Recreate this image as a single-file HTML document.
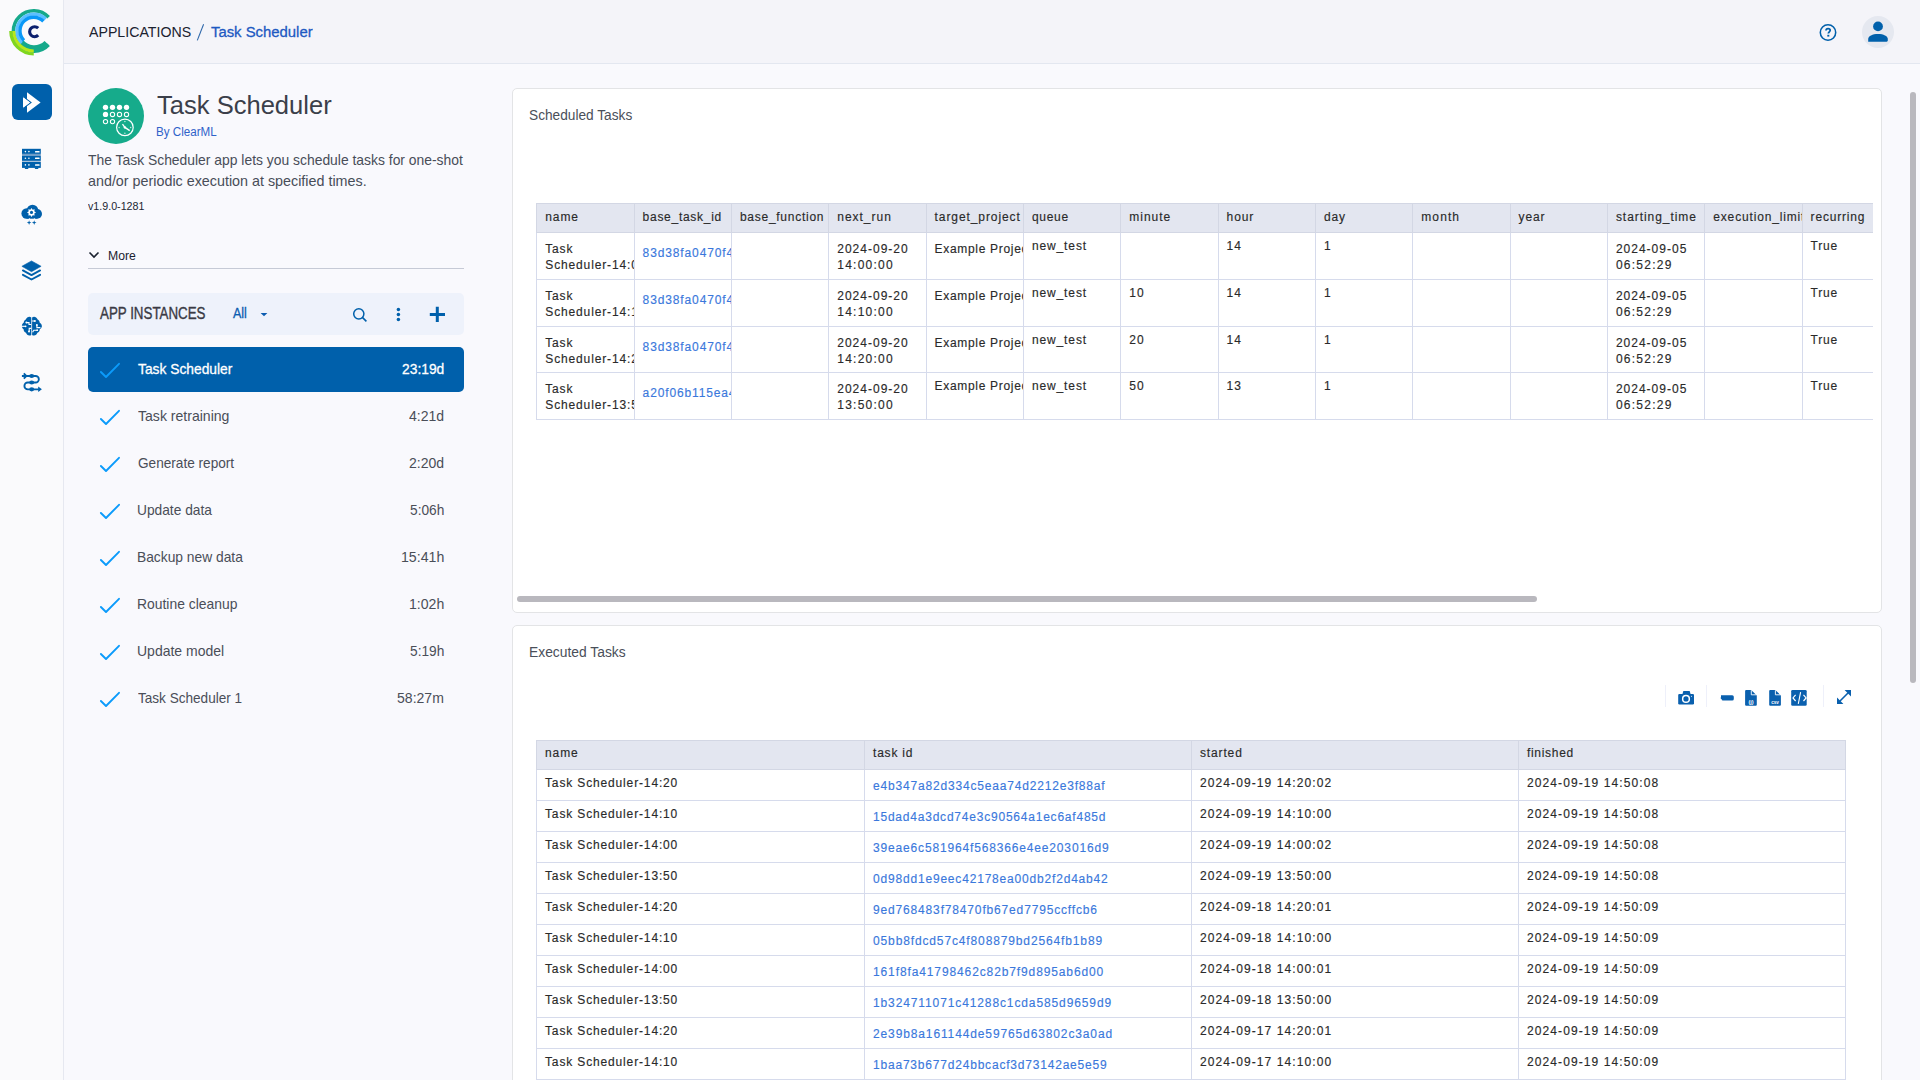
<!DOCTYPE html><html><head><meta charset="utf-8"><style>
*{box-sizing:border-box;margin:0;padding:0}
html,body{width:1920px;height:1080px;overflow:hidden;background:#f9f9fd;font-family:"Liberation Sans", sans-serif;}
.a{position:absolute}
.t{position:absolute;white-space:nowrap;line-height:1}
svg{position:absolute;overflow:visible}
</style></head><body>
<div class="a" style="left:0;top:0;width:63px;height:1080px;background:#fafafc"></div><div class="a" style="left:63px;top:0;width:1px;height:1080px;background:#e6e8f0"></div><div class="a" style="left:64px;top:0;width:1856px;height:63px;background:#f4f4f9"></div><div class="a" style="left:64px;top:63px;width:1856px;height:1px;background:#e3e7f0"></div><svg style="left:0;top:0" width="64" height="64" viewBox="0 0 64 64"><g fill="none"><path d="M48.60 17.16 A20.3 20.3 0 1 0 48.60 44.84" stroke="#16a98b" stroke-width="3.6"/><path d="M49.0 45.3 L44.6 41.0 A14.5 14.5 0 0 1 22.8 39.5 L19.7 44.5 A20 20 0 0 0 49.0 45.3 Z" fill="#16a98b"/><path d="M45.77 18.98 A17.0 17.0 0 0 0 21.73 43.02" stroke="#5bbfff" stroke-width="3.3"/><path d="M43.44 21.31 A13.7 13.7 0 0 0 23.90 40.52" stroke="#0a98f7" stroke-width="3.4"/><path d="M10.75 31.00 A23.0 23.0 0 0 0 33.75 54.00" stroke="#80d61e" stroke-width="3.1"/><path d="M13.75 31.00 A20.0 20.0 0 0 0 33.75 51.00" stroke="#b9e71a" stroke-width="3.0"/></g><path d="M38.2 28.2 A5 5 0 1 0 38.2 35.2" fill="none" stroke="#0b1f6e" stroke-width="3.1"/></svg><div class="a" style="left:12px;top:84px;width:40px;height:36px;border-radius:6px;background:#0060ab"></div><svg style="left:12px;top:84px" width="40" height="36" viewBox="0 0 40 36">
<path d="M15 8.2 L28.6 18.5 L15 28.8 Z" fill="#fff"/>
<path d="M11 12.6 L19 18.5 L11 24.4 Z" fill="#fff" stroke="#0060ab" stroke-width="1.1" stroke-linejoin="miter"/>
<path d="M11 13.2 L18 18.5 L11 23.8 Z" fill="#fff"/>
</svg><svg style="left:18px;top:144px" width="28" height="28" viewBox="0 0 28 28">
<rect x="4" y="4.8" width="18.8" height="5.1" fill="#0060ab"/>
<rect x="4" y="9.9" width="18.8" height="2" fill="#6f9cc6"/>
<rect x="4" y="11.9" width="18.8" height="5" fill="#0060ab"/>
<rect x="4" y="16.9" width="18.8" height="1" fill="#b7c8dc"/>
<rect x="4" y="17.9" width="18.8" height="6" fill="#0060ab"/>
<rect x="6.8" y="23.5" width="3.6" height="1.4" rx="0.6" fill="#0060ab"/><rect x="16.8" y="23.5" width="3.6" height="1.4" rx="0.6" fill="#0060ab"/>
<g fill="#fff"><circle cx="7.4" cy="7.6" r="0.8"/><circle cx="10.9" cy="7.6" r="0.8"/><rect x="17" y="6.9" width="4.6" height="1.5" rx="0.5"/>
<circle cx="7.4" cy="14.2" r="0.8"/><circle cx="10.9" cy="14.2" r="0.8"/><rect x="17" y="13.5" width="4.6" height="1.5" rx="0.5"/>
<circle cx="7.4" cy="20.9" r="0.8"/><circle cx="10.9" cy="20.9" r="0.8"/><rect x="17" y="20.2" width="4.6" height="1.5" rx="0.5"/></g>
</svg><svg style="left:18px;top:200px" width="28" height="28" viewBox="0 0 28 28">
<g fill="#0060ab"><circle cx="8.6" cy="13.5" r="5.2"/><circle cx="14.5" cy="10.4" r="5.7"/><circle cx="19.2" cy="13.9" r="4.8"/><rect x="8.6" y="11" width="10.6" height="7.7"/></g>
<path d="M13.50,7.90 L14.65,9.63 L16.68,9.22 L16.27,11.25 L18.00,12.40 L16.27,13.55 L16.68,15.58 L14.65,15.17 L13.50,16.90 L12.35,15.17 L10.32,15.58 L10.73,13.55 L9.00,12.40 L10.73,11.25 L10.32,9.22 L12.35,9.63 Z" fill="#fff"/><circle cx="13.5" cy="12.4" r="1.55" fill="#0060ab"/>
<circle cx="11.4" cy="18.9" r="0.6" fill="#fff"/><circle cx="16.4" cy="18.9" r="0.6" fill="#fff"/>
<path d="M11.10,20.30 L11.70,22.00 L13.40,22.60 L11.70,23.20 L11.10,24.90 L10.50,23.20 L8.80,22.60 L10.50,22.00 Z" fill="#0060ab"/><path d="M16.20,20.30 L16.80,22.00 L18.50,22.60 L16.80,23.20 L16.20,24.90 L15.60,23.20 L13.90,22.60 L15.60,22.00 Z" fill="#0060ab"/>
</svg><svg style="left:18px;top:256px" width="28" height="28" viewBox="0 0 28 28">
<path d="M13.5 4.9 L23.1 10.3 L13.5 15.7 L3.9 10.3 Z" fill="#0060ab" stroke="#0060ab" stroke-width="0.6" stroke-linejoin="round"/>
<path d="M4.9 14.4 L13.5 19.1 L22.1 14.4" fill="none" stroke="#0060ab" stroke-width="1.9" stroke-linecap="round" stroke-linejoin="round"/>
<path d="M4.9 18.8 L13.5 23.5 L22.1 18.8" fill="none" stroke="#0060ab" stroke-width="1.9" stroke-linecap="round" stroke-linejoin="round"/>
</svg><svg style="left:18px;top:312px" width="28" height="28" viewBox="0 0 28 28">
<g fill="#0060ab">
<path d="M13.3 5.6 C12.6 4.9 11.6 4.7 10.6 4.9 C9.2 5.1 8.1 6.2 7.8 7.6 C6.6 8.1 5.8 9.3 5.8 10.6 C4.6 11.3 3.9 12.6 3.9 14 C3.9 15.4 4.6 16.6 5.6 17.3 C5.6 18.9 6.6 20.3 8 20.8 C8.4 22.4 9.8 23.5 11.4 23.5 C12.2 23.5 12.8 23.3 13.3 22.9 Z"/>
<path d="M14.1 5.6 C14.8 4.9 15.8 4.7 16.8 4.9 C18.2 5.1 19.3 6.2 19.6 7.6 C20.8 8.1 21.6 9.3 21.6 10.6 C22.8 11.3 23.9 12.6 23.9 14.4 C23.6 15.6 22.8 16.6 21.8 17.3 C21.8 18.9 20.8 20.3 19.4 20.8 C19 22.4 17.6 23.5 16 23.5 C15.2 23.5 14.6 23.3 14.1 22.9 Z"/>
</g>
<g fill="none" stroke="#fff" stroke-width="1.1">
<path d="M3.5 14.3 H7.5"/><path d="M8.2 10.6 H11 V12.5 H13.2"/><path d="M13.3 16.4 H11.2 V19.6"/>
<path d="M14.2 9 H16.8"/><path d="M18.9 13 V15.6 H22.4"/><path d="M14.6 20.2 L15.8 18.2 H19.2"/>
</g>
<g fill="#fff"><circle cx="8.4" cy="10.6" r="1"/><circle cx="11" cy="19.6" r="1"/><circle cx="16.9" cy="9" r="1"/><circle cx="18.9" cy="13.1" r="1"/><circle cx="19.2" cy="18.2" r="0.9"/><circle cx="7.6" cy="14.3" r="0.9"/></g>
</svg><svg style="left:18px;top:368px" width="28" height="28" viewBox="0 0 28 28">
<g fill="none" stroke="#0060ab" stroke-width="1.85">
<path d="M3.9 8 H17.6 A3.25 3.25 0 0 1 17.6 14.5 H9.8 A3.4 3.4 0 0 0 9.8 21.3 H22"/>
<path d="M5.8 5.4 L8.4 8 L5.8 10.6"/>
</g>
<path d="M20.2 18.6 L23.9 21.3 L20.2 24 Z" fill="#0060ab"/>
<g fill="#0060ab"><ellipse cx="13.7" cy="8" rx="2.5" ry="2.1"/><ellipse cx="13.7" cy="14.5" rx="2.5" ry="2.1"/><ellipse cx="13.7" cy="21.3" rx="2.5" ry="2.1"/></g>
</svg><div class="t" style="left:88.50px;top:24.20px;font-size:15.3px;color:#1b2230;transform:scaleX(0.9262);transform-origin:0 0;">APPLICATIONS</div><svg style="left:190px;top:18px" width="25" height="28" viewBox="0 0 25 28"><path d="M13.6 6.2 L7.3 22.4" stroke="#2a64a8" stroke-width="1.05"/></svg><div class="t" style="left:210.90px;top:24.20px;font-size:15.3px;color:#1d59c2;transform:scaleX(0.9714);transform-origin:0 0;-webkit-text-stroke:0.3px #1d59c2;">Task Scheduler</div><svg style="left:1819px;top:23px" width="18" height="19" viewBox="0 0 18 19">
<circle cx="9" cy="9.5" r="7.7" fill="none" stroke="#0060ab" stroke-width="1.55"/>
<path d="M7 7.6 C7 6.2 7.9 5.5 9.1 5.5 C10.3 5.5 11.2 6.3 11.2 7.3 C11.2 8.7 9.3 8.9 9.3 10.6" fill="none" stroke="#0060ab" stroke-width="1.75"/>
<rect x="8.3" y="11.8" width="2" height="1.8" fill="#0060ab"/>
</svg><div class="a" style="left:1862px;top:16px;width:32px;height:32px;border-radius:50%;background:#e5e8f0"></div><svg style="left:1862px;top:16px" width="32" height="32" viewBox="0 0 32 32">
<circle cx="16" cy="10.4" r="4.9" fill="#0060ab"/>
<path d="M6.2 25.7 V23 C6.2 19.9 10.5 17.9 16 17.9 C21.5 17.9 25.8 19.9 25.8 23 V24.6 Q25.8 25.7 24.7 25.7 Z" fill="#0060ab"/>
</svg><div class="a" style="left:88px;top:88px;width:56px;height:56px;border-radius:50%;background:#16ab8b"></div><svg style="left:88px;top:88px" width="56" height="56" viewBox="0 0 56 56"><circle cx="17.5" cy="19.35" r="2.65" fill="#fff"/><circle cx="24.5" cy="19.35" r="2.65" fill="#fff"/><circle cx="31.5" cy="19.35" r="2.65" fill="#fff"/><circle cx="38.5" cy="19.35" r="2.65" fill="#fff"/><circle cx="17.5" cy="26.450000000000003" r="2.65" fill="#fff"/><circle cx="24.5" cy="26.450000000000003" r="2.15" fill="none" stroke="#fff" stroke-width="1.05"/><circle cx="31.5" cy="26.450000000000003" r="2.15" fill="none" stroke="#fff" stroke-width="1.05"/><circle cx="38.5" cy="26.450000000000003" r="2.15" fill="none" stroke="#fff" stroke-width="1.05"/><circle cx="17.5" cy="33.55" r="2.15" fill="none" stroke="#fff" stroke-width="1.05"/><circle cx="24.5" cy="33.55" r="2.15" fill="none" stroke="#fff" stroke-width="1.05"/><circle cx="36.9" cy="39.4" r="8.3" fill="#16ab8b" stroke="#fff" stroke-width="1.2"/><path d="M34.5 36.2 L36.9 39.4 L41.7 42.6" fill="none" stroke="#fff" stroke-width="1.3"/><circle cx="36.9" cy="39.4" r="1.2" fill="#fff"/><g fill="#bfe8dc"><circle cx="36.9" cy="33.6" r="0.75"/><circle cx="36.9" cy="45.2" r="0.75"/><circle cx="31.1" cy="39.4" r="0.75"/><circle cx="42.7" cy="39.4" r="0.75"/></g></svg><div class="t" style="left:156.80px;top:91.61px;font-size:26px;color:#3b3f4a;transform:scaleX(0.9826);transform-origin:0 0;">Task Scheduler</div><div class="t" style="left:155.86px;top:125.69px;font-size:12.3px;color:#2f62c9;transform:scaleX(0.9449);transform-origin:0 0;">By ClearML</div><div class="t" style="left:88.10px;top:152.14px;font-size:15px;color:#484d58;transform:scaleX(0.9257);transform-origin:0 0;">The Task Scheduler app lets you schedule tasks for one-shot</div><div class="t" style="left:88.10px;top:172.64px;font-size:15px;color:#484d58;transform:scaleX(0.9547);transform-origin:0 0;">and/or periodic execution at specified times.</div><div class="t" style="left:88.00px;top:201.23px;font-size:10.5px;color:#222633;transform:scaleX(1.0176);transform-origin:0 0;">v1.9.0-1281</div><svg style="left:88px;top:250px" width="12" height="10" viewBox="0 0 12 10"><path d="M1.5 2.5 L6 7 L10.5 2.5" fill="none" stroke="#1b2230" stroke-width="1.6"/></svg><div class="t" style="left:108.32px;top:250.37px;font-size:12.5px;color:#1b2230;transform:scaleX(0.9772);transform-origin:0 0;">More</div><div class="a" style="left:88px;top:268px;width:376px;height:1px;background:#c6cad6"></div><div class="a" style="left:88px;top:293px;width:376px;height:42px;border-radius:5px;background:#eef2fb"></div><div class="t" style="left:100.20px;top:305.71px;font-size:16px;color:#3a3a44;transform:scaleX(0.8338);transform-origin:0 0;-webkit-text-stroke:0.35px #3a3a44;">APP INSTANCES</div><div class="t" style="left:233.00px;top:306.02px;font-size:14.4px;color:#0b5cb0;transform:scaleX(0.8673);transform-origin:0 0;-webkit-text-stroke:0.3px #0b5cb0;">All</div><svg style="left:259.5px;top:312px" width="9" height="6" viewBox="0 0 9 6"><path d="M0.6 1 L7.4 1 L4 4.3 Z" fill="#0b5cb0"/></svg><svg style="left:352px;top:307px" width="16" height="16" viewBox="0 0 16 16"><circle cx="6.8" cy="6.8" r="5.1" fill="none" stroke="#0060ab" stroke-width="1.5"/><path d="M10.4 10.4 L14.4 14.4" stroke="#0060ab" stroke-width="1.6"/></svg><svg style="left:395px;top:306px" width="6" height="17" viewBox="0 0 6 17"><circle cx="3.4" cy="3.5" r="1.75" fill="#0060ab"/><circle cx="3.4" cy="8.5" r="1.75" fill="#0060ab"/><circle cx="3.4" cy="13.5" r="1.75" fill="#0060ab"/></svg><svg style="left:429px;top:306px" width="17" height="17" viewBox="0 0 17 17"><path d="M8.3 0.8 V16 M0.8 8.4 H16" stroke="#0060ab" stroke-width="3"/></svg><div class="a" style="left:88px;top:347px;width:376px;height:45px;border-radius:5px;background:#0060ab"></div><svg style="left:99px;top:362.0px" width="22" height="16" viewBox="0 0 22 16"><path d="M1.9 10 L7 15 L20 1.8" fill="none" stroke="#0b9bfb" stroke-width="1.9" stroke-linecap="round" stroke-linejoin="round"/></svg><div class="t" style="left:138.30px;top:361.24px;font-size:15px;color:#ffffff;transform:scaleX(0.9195);transform-origin:0 0;-webkit-text-stroke:0.3px #fff;">Task Scheduler</div><div class="t" style="left:401.60px;top:361.24px;font-size:15px;color:#ffffff;transform:scaleX(0.9223);transform-origin:0 0;-webkit-text-stroke:0.3px #fff;">23:19d</div><svg style="left:99px;top:409.0px" width="22" height="16" viewBox="0 0 22 16"><path d="M1.9 10 L7 15 L20 1.8" fill="none" stroke="#0b9bfb" stroke-width="1.9" stroke-linecap="round" stroke-linejoin="round"/></svg><div class="t" style="left:138.30px;top:408.24px;font-size:15px;color:#4a4e58;transform:scaleX(0.9372);transform-origin:0 0;">Task retraining</div><div class="t" style="left:408.80px;top:408.24px;font-size:15px;color:#4a4e58;transform:scaleX(0.9356);transform-origin:0 0;">4:21d</div><svg style="left:99px;top:456.0px" width="22" height="16" viewBox="0 0 22 16"><path d="M1.9 10 L7 15 L20 1.8" fill="none" stroke="#0b9bfb" stroke-width="1.9" stroke-linecap="round" stroke-linejoin="round"/></svg><div class="t" style="left:138.30px;top:455.24px;font-size:15px;color:#4a4e58;transform:scaleX(0.9079);transform-origin:0 0;">Generate report</div><div class="t" style="left:408.80px;top:455.24px;font-size:15px;color:#4a4e58;transform:scaleX(0.9356);transform-origin:0 0;">2:20d</div><svg style="left:99px;top:503.0px" width="22" height="16" viewBox="0 0 22 16"><path d="M1.9 10 L7 15 L20 1.8" fill="none" stroke="#0b9bfb" stroke-width="1.9" stroke-linecap="round" stroke-linejoin="round"/></svg><div class="t" style="left:137.38px;top:502.24px;font-size:15px;color:#4a4e58;transform:scaleX(0.9166);transform-origin:0 0;">Update data</div><div class="t" style="left:409.60px;top:502.24px;font-size:15px;color:#4a4e58;transform:scaleX(0.9141);transform-origin:0 0;">5:06h</div><svg style="left:99px;top:550.0px" width="22" height="16" viewBox="0 0 22 16"><path d="M1.9 10 L7 15 L20 1.8" fill="none" stroke="#0b9bfb" stroke-width="1.9" stroke-linecap="round" stroke-linejoin="round"/></svg><div class="t" style="left:137.38px;top:549.24px;font-size:15px;color:#4a4e58;transform:scaleX(0.9195);transform-origin:0 0;">Backup new data</div><div class="t" style="left:400.66px;top:549.24px;font-size:15px;color:#4a4e58;transform:scaleX(0.9430);transform-origin:0 0;">15:41h</div><svg style="left:99px;top:597.0px" width="22" height="16" viewBox="0 0 22 16"><path d="M1.9 10 L7 15 L20 1.8" fill="none" stroke="#0b9bfb" stroke-width="1.9" stroke-linecap="round" stroke-linejoin="round"/></svg><div class="t" style="left:137.37px;top:596.24px;font-size:15px;color:#4a4e58;transform:scaleX(0.9256);transform-origin:0 0;">Routine cleanup</div><div class="t" style="left:408.66px;top:596.24px;font-size:15px;color:#4a4e58;transform:scaleX(0.9394);transform-origin:0 0;">1:02h</div><svg style="left:99px;top:644.0px" width="22" height="16" viewBox="0 0 22 16"><path d="M1.9 10 L7 15 L20 1.8" fill="none" stroke="#0b9bfb" stroke-width="1.9" stroke-linecap="round" stroke-linejoin="round"/></svg><div class="t" style="left:137.37px;top:643.24px;font-size:15px;color:#4a4e58;transform:scaleX(0.9331);transform-origin:0 0;">Update model</div><div class="t" style="left:409.60px;top:643.24px;font-size:15px;color:#4a4e58;transform:scaleX(0.9141);transform-origin:0 0;">5:19h</div><svg style="left:99px;top:691.0px" width="22" height="16" viewBox="0 0 22 16"><path d="M1.9 10 L7 15 L20 1.8" fill="none" stroke="#0b9bfb" stroke-width="1.9" stroke-linecap="round" stroke-linejoin="round"/></svg><div class="t" style="left:138.30px;top:690.24px;font-size:15px;color:#4a4e58;transform:scaleX(0.9048);transform-origin:0 0;">Task Scheduler 1</div><div class="t" style="left:397.20px;top:690.24px;font-size:15px;color:#4a4e58;transform:scaleX(0.9367);transform-origin:0 0;">58:27m</div><div class="a" style="left:512px;top:88px;width:1370px;height:525px;border:1px solid #e3e4e6;border-radius:5px;background:#fff"></div><div class="a" style="left:512px;top:625px;width:1370px;height:520px;border:1px solid #e3e4e6;border-radius:5px;background:#fff"></div><div class="t" style="left:529.20px;top:107.10px;font-size:15.3px;color:#4a4f5a;transform:scaleX(0.8949);transform-origin:0 0;">Scheduled Tasks</div><div class="t" style="left:529.10px;top:644.10px;font-size:15.3px;color:#4a4f5a;transform:scaleX(0.9044);transform-origin:0 0;">Executed Tasks</div><div class="a" style="left:517px;top:596px;width:1020px;height:6px;border-radius:3px;background:#b9b8be"></div><div class="a" style="left:1910px;top:92px;width:6px;height:591px;border-radius:3px;background:#b9b8be"></div><div class="a" style="left:536px;top:203px;width:1337px;height:217px;overflow:hidden"><div class="a" style="left:0;top:0;width:1337px;height:29px;background:#e3e6f0"></div><div class="a" style="left:0;top:0px;width:1337px;height:1px;background:#d3d7e4"></div><div class="a" style="left:0;top:29px;width:1337px;height:1px;background:#d3d7e4"></div><div class="a" style="left:0;top:76px;width:1337px;height:1px;background:#d6dbec"></div><div class="a" style="left:0;top:123px;width:1337px;height:1px;background:#d6dbec"></div><div class="a" style="left:0;top:169px;width:1337px;height:1px;background:#d6dbec"></div><div class="a" style="left:0;top:216px;width:1337px;height:1px;background:#d6dbec"></div><div class="a" style="left:0px;top:0;width:1px;height:29px;background:#d3d7e4"></div><div class="a" style="left:0px;top:30px;width:1px;height:187px;background:#d6dbec"></div><div class="a" style="left:98px;top:0;width:1px;height:29px;background:#d3d7e4"></div><div class="a" style="left:98px;top:30px;width:1px;height:187px;background:#d6dbec"></div><div class="a" style="left:195px;top:0;width:1px;height:29px;background:#d3d7e4"></div><div class="a" style="left:195px;top:30px;width:1px;height:187px;background:#d6dbec"></div><div class="a" style="left:292px;top:0;width:1px;height:29px;background:#d3d7e4"></div><div class="a" style="left:292px;top:30px;width:1px;height:187px;background:#d6dbec"></div><div class="a" style="left:390px;top:0;width:1px;height:29px;background:#d3d7e4"></div><div class="a" style="left:390px;top:30px;width:1px;height:187px;background:#d6dbec"></div><div class="a" style="left:487px;top:0;width:1px;height:29px;background:#d3d7e4"></div><div class="a" style="left:487px;top:30px;width:1px;height:187px;background:#d6dbec"></div><div class="a" style="left:584px;top:0;width:1px;height:29px;background:#d3d7e4"></div><div class="a" style="left:584px;top:30px;width:1px;height:187px;background:#d6dbec"></div><div class="a" style="left:682px;top:0;width:1px;height:29px;background:#d3d7e4"></div><div class="a" style="left:682px;top:30px;width:1px;height:187px;background:#d6dbec"></div><div class="a" style="left:779px;top:0;width:1px;height:29px;background:#d3d7e4"></div><div class="a" style="left:779px;top:30px;width:1px;height:187px;background:#d6dbec"></div><div class="a" style="left:876px;top:0;width:1px;height:29px;background:#d3d7e4"></div><div class="a" style="left:876px;top:30px;width:1px;height:187px;background:#d6dbec"></div><div class="a" style="left:974px;top:0;width:1px;height:29px;background:#d3d7e4"></div><div class="a" style="left:974px;top:30px;width:1px;height:187px;background:#d6dbec"></div><div class="a" style="left:1071px;top:0;width:1px;height:29px;background:#d3d7e4"></div><div class="a" style="left:1071px;top:30px;width:1px;height:187px;background:#d6dbec"></div><div class="a" style="left:1168px;top:0;width:1px;height:29px;background:#d3d7e4"></div><div class="a" style="left:1168px;top:30px;width:1px;height:187px;background:#d6dbec"></div><div class="a" style="left:1266px;top:0;width:1px;height:29px;background:#d3d7e4"></div><div class="a" style="left:1266px;top:30px;width:1px;height:187px;background:#d6dbec"></div><div class="a" style="left:1363px;top:0;width:1px;height:29px;background:#d3d7e4"></div><div class="a" style="left:1363px;top:30px;width:1px;height:187px;background:#d6dbec"></div><div class="a" style="left:1px;top:0;width:97px;height:216px;overflow:hidden"><div class="t" style="left:8.27px;top:8.34px;font-size:12px;-webkit-text-stroke:0.15px currentColor;letter-spacing:0.901px;color:#2a2a2a">name</div></div><div class="a" style="left:99px;top:0;width:96px;height:216px;overflow:hidden"><div class="t" style="left:7.60px;top:8.34px;font-size:12px;-webkit-text-stroke:0.15px currentColor;letter-spacing:0.725px;color:#2a2a2a">base_task_id</div></div><div class="a" style="left:196px;top:0;width:96px;height:216px;overflow:hidden"><div class="t" style="left:7.93px;top:8.34px;font-size:12px;-webkit-text-stroke:0.15px currentColor;letter-spacing:0.735px;color:#2a2a2a">base_function</div></div><div class="a" style="left:293px;top:0;width:97px;height:216px;overflow:hidden"><div class="t" style="left:8.27px;top:8.34px;font-size:12px;-webkit-text-stroke:0.15px currentColor;letter-spacing:0.978px;color:#2a2a2a">next_run</div></div><div class="a" style="left:391px;top:0;width:96px;height:216px;overflow:hidden"><div class="t" style="left:7.60px;top:8.34px;font-size:12px;-webkit-text-stroke:0.15px currentColor;letter-spacing:0.915px;color:#2a2a2a">target_project</div></div><div class="a" style="left:488px;top:0;width:96px;height:216px;overflow:hidden"><div class="t" style="left:7.93px;top:8.34px;font-size:12px;-webkit-text-stroke:0.15px currentColor;letter-spacing:0.719px;color:#2a2a2a">queue</div></div><div class="a" style="left:585px;top:0;width:97px;height:216px;overflow:hidden"><div class="t" style="left:8.26px;top:8.34px;font-size:12px;-webkit-text-stroke:0.15px currentColor;letter-spacing:1.001px;color:#2a2a2a">minute</div></div><div class="a" style="left:683px;top:0;width:96px;height:216px;overflow:hidden"><div class="t" style="left:7.60px;top:8.34px;font-size:12px;-webkit-text-stroke:0.15px currentColor;letter-spacing:0.892px;color:#2a2a2a">hour</div></div><div class="a" style="left:780px;top:0;width:96px;height:216px;overflow:hidden"><div class="t" style="left:7.93px;top:8.34px;font-size:12px;-webkit-text-stroke:0.15px currentColor;letter-spacing:0.811px;color:#2a2a2a">day</div></div><div class="a" style="left:877px;top:0;width:97px;height:216px;overflow:hidden"><div class="t" style="left:8.26px;top:8.34px;font-size:12px;-webkit-text-stroke:0.15px currentColor;letter-spacing:1.104px;color:#2a2a2a">month</div></div><div class="a" style="left:975px;top:0;width:96px;height:216px;overflow:hidden"><div class="t" style="left:7.60px;top:8.34px;font-size:12px;-webkit-text-stroke:0.15px currentColor;letter-spacing:0.812px;color:#2a2a2a">year</div></div><div class="a" style="left:1072px;top:0;width:96px;height:216px;overflow:hidden"><div class="t" style="left:7.93px;top:8.34px;font-size:12px;-webkit-text-stroke:0.15px currentColor;letter-spacing:0.937px;color:#2a2a2a">starting_time</div></div><div class="a" style="left:1169px;top:0;width:97px;height:216px;overflow:hidden"><div class="t" style="left:8.26px;top:8.34px;font-size:12px;-webkit-text-stroke:0.15px currentColor;letter-spacing:0.845px;color:#2a2a2a">execution_limit</div></div><div class="a" style="left:1267px;top:0;width:96px;height:216px;overflow:hidden"><div class="t" style="left:7.60px;top:8.34px;font-size:12px;-webkit-text-stroke:0.15px currentColor;letter-spacing:0.819px;color:#2a2a2a">recurring</div></div><div class="a" style="left:1px;top:0;width:97px;height:216px;overflow:hidden"><div class="t" style="left:8.27px;top:40.14px;font-size:12px;-webkit-text-stroke:0.15px currentColor;letter-spacing:0.818px;color:#2a2a2a">Task</div></div><div class="a" style="left:1px;top:0;width:97px;height:216px;overflow:hidden"><div class="t" style="left:8.27px;top:56.14px;font-size:12px;-webkit-text-stroke:0.15px currentColor;letter-spacing:0.861px;color:#2a2a2a">Scheduler-14:00</div></div><div class="a" style="left:99px;top:0;width:96px;height:216px;overflow:hidden"><div class="t" style="left:7.60px;top:44.14px;font-size:12px;-webkit-text-stroke:0.15px currentColor;letter-spacing:0.877px;color:#3a78dc">83d38fa0470f4a1b</div></div><div class="a" style="left:293px;top:0;width:97px;height:216px;overflow:hidden"><div class="t" style="left:8.27px;top:40.14px;font-size:12px;-webkit-text-stroke:0.15px currentColor;letter-spacing:1.001px;color:#2a2a2a">2024-09-20</div></div><div class="a" style="left:293px;top:0;width:97px;height:216px;overflow:hidden"><div class="t" style="left:8.27px;top:56.14px;font-size:12px;-webkit-text-stroke:0.15px currentColor;letter-spacing:1.246px;color:#2a2a2a">14:00:00</div></div><div class="a" style="left:391px;top:0;width:96px;height:216px;overflow:hidden"><div class="t" style="left:7.60px;top:40.14px;font-size:12px;-webkit-text-stroke:0.15px currentColor;letter-spacing:0.683px;color:#2a2a2a">Example Project</div></div><div class="a" style="left:488px;top:0;width:96px;height:216px;overflow:hidden"><div class="t" style="left:7.93px;top:37.14px;font-size:12px;-webkit-text-stroke:0.15px currentColor;letter-spacing:0.878px;color:#2a2a2a">new_test</div></div><div class="a" style="left:683px;top:0;width:96px;height:216px;overflow:hidden"><div class="t" style="left:7.60px;top:37.14px;font-size:12px;-webkit-text-stroke:0.15px currentColor;letter-spacing:0.952px;color:#2a2a2a">14</div></div><div class="a" style="left:780px;top:0;width:96px;height:216px;overflow:hidden"><div class="t" style="left:7.93px;top:37.14px;font-size:12px;-webkit-text-stroke:0.15px currentColor;letter-spacing:0.944px;color:#2a2a2a">1</div></div><div class="a" style="left:1072px;top:0;width:96px;height:216px;overflow:hidden"><div class="t" style="left:7.93px;top:40.14px;font-size:12px;-webkit-text-stroke:0.15px currentColor;letter-spacing:1.001px;color:#2a2a2a">2024-09-05</div></div><div class="a" style="left:1072px;top:0;width:96px;height:216px;overflow:hidden"><div class="t" style="left:7.93px;top:56.14px;font-size:12px;-webkit-text-stroke:0.15px currentColor;letter-spacing:1.246px;color:#2a2a2a">06:52:29</div></div><div class="a" style="left:1267px;top:0;width:96px;height:216px;overflow:hidden"><div class="t" style="left:7.60px;top:37.14px;font-size:12px;-webkit-text-stroke:0.15px currentColor;letter-spacing:0.757px;color:#2a2a2a">True</div></div><div class="a" style="left:1px;top:0;width:97px;height:216px;overflow:hidden"><div class="t" style="left:8.27px;top:86.89px;font-size:12px;-webkit-text-stroke:0.15px currentColor;letter-spacing:0.818px;color:#2a2a2a">Task</div></div><div class="a" style="left:1px;top:0;width:97px;height:216px;overflow:hidden"><div class="t" style="left:8.27px;top:102.89px;font-size:12px;-webkit-text-stroke:0.15px currentColor;letter-spacing:0.861px;color:#2a2a2a">Scheduler-14:10</div></div><div class="a" style="left:99px;top:0;width:96px;height:216px;overflow:hidden"><div class="t" style="left:7.60px;top:90.89px;font-size:12px;-webkit-text-stroke:0.15px currentColor;letter-spacing:0.877px;color:#3a78dc">83d38fa0470f4a1b</div></div><div class="a" style="left:293px;top:0;width:97px;height:216px;overflow:hidden"><div class="t" style="left:8.27px;top:86.89px;font-size:12px;-webkit-text-stroke:0.15px currentColor;letter-spacing:1.001px;color:#2a2a2a">2024-09-20</div></div><div class="a" style="left:293px;top:0;width:97px;height:216px;overflow:hidden"><div class="t" style="left:8.27px;top:102.89px;font-size:12px;-webkit-text-stroke:0.15px currentColor;letter-spacing:1.246px;color:#2a2a2a">14:10:00</div></div><div class="a" style="left:391px;top:0;width:96px;height:216px;overflow:hidden"><div class="t" style="left:7.60px;top:86.89px;font-size:12px;-webkit-text-stroke:0.15px currentColor;letter-spacing:0.683px;color:#2a2a2a">Example Project</div></div><div class="a" style="left:488px;top:0;width:96px;height:216px;overflow:hidden"><div class="t" style="left:7.93px;top:83.89px;font-size:12px;-webkit-text-stroke:0.15px currentColor;letter-spacing:0.878px;color:#2a2a2a">new_test</div></div><div class="a" style="left:585px;top:0;width:97px;height:216px;overflow:hidden"><div class="t" style="left:8.26px;top:83.89px;font-size:12px;-webkit-text-stroke:0.15px currentColor;letter-spacing:0.952px;color:#2a2a2a">10</div></div><div class="a" style="left:683px;top:0;width:96px;height:216px;overflow:hidden"><div class="t" style="left:7.60px;top:83.89px;font-size:12px;-webkit-text-stroke:0.15px currentColor;letter-spacing:0.952px;color:#2a2a2a">14</div></div><div class="a" style="left:780px;top:0;width:96px;height:216px;overflow:hidden"><div class="t" style="left:7.93px;top:83.89px;font-size:12px;-webkit-text-stroke:0.15px currentColor;letter-spacing:0.944px;color:#2a2a2a">1</div></div><div class="a" style="left:1072px;top:0;width:96px;height:216px;overflow:hidden"><div class="t" style="left:7.93px;top:86.89px;font-size:12px;-webkit-text-stroke:0.15px currentColor;letter-spacing:1.001px;color:#2a2a2a">2024-09-05</div></div><div class="a" style="left:1072px;top:0;width:96px;height:216px;overflow:hidden"><div class="t" style="left:7.93px;top:102.89px;font-size:12px;-webkit-text-stroke:0.15px currentColor;letter-spacing:1.246px;color:#2a2a2a">06:52:29</div></div><div class="a" style="left:1267px;top:0;width:96px;height:216px;overflow:hidden"><div class="t" style="left:7.60px;top:83.89px;font-size:12px;-webkit-text-stroke:0.15px currentColor;letter-spacing:0.757px;color:#2a2a2a">True</div></div><div class="a" style="left:1px;top:0;width:97px;height:216px;overflow:hidden"><div class="t" style="left:8.27px;top:133.64px;font-size:12px;-webkit-text-stroke:0.15px currentColor;letter-spacing:0.818px;color:#2a2a2a">Task</div></div><div class="a" style="left:1px;top:0;width:97px;height:216px;overflow:hidden"><div class="t" style="left:8.27px;top:149.64px;font-size:12px;-webkit-text-stroke:0.15px currentColor;letter-spacing:0.861px;color:#2a2a2a">Scheduler-14:20</div></div><div class="a" style="left:99px;top:0;width:96px;height:216px;overflow:hidden"><div class="t" style="left:7.60px;top:137.64px;font-size:12px;-webkit-text-stroke:0.15px currentColor;letter-spacing:0.877px;color:#3a78dc">83d38fa0470f4a1b</div></div><div class="a" style="left:293px;top:0;width:97px;height:216px;overflow:hidden"><div class="t" style="left:8.27px;top:133.64px;font-size:12px;-webkit-text-stroke:0.15px currentColor;letter-spacing:1.001px;color:#2a2a2a">2024-09-20</div></div><div class="a" style="left:293px;top:0;width:97px;height:216px;overflow:hidden"><div class="t" style="left:8.27px;top:149.64px;font-size:12px;-webkit-text-stroke:0.15px currentColor;letter-spacing:1.246px;color:#2a2a2a">14:20:00</div></div><div class="a" style="left:391px;top:0;width:96px;height:216px;overflow:hidden"><div class="t" style="left:7.60px;top:133.64px;font-size:12px;-webkit-text-stroke:0.15px currentColor;letter-spacing:0.683px;color:#2a2a2a">Example Project</div></div><div class="a" style="left:488px;top:0;width:96px;height:216px;overflow:hidden"><div class="t" style="left:7.93px;top:130.64px;font-size:12px;-webkit-text-stroke:0.15px currentColor;letter-spacing:0.878px;color:#2a2a2a">new_test</div></div><div class="a" style="left:585px;top:0;width:97px;height:216px;overflow:hidden"><div class="t" style="left:8.26px;top:130.64px;font-size:12px;-webkit-text-stroke:0.15px currentColor;letter-spacing:0.952px;color:#2a2a2a">20</div></div><div class="a" style="left:683px;top:0;width:96px;height:216px;overflow:hidden"><div class="t" style="left:7.60px;top:130.64px;font-size:12px;-webkit-text-stroke:0.15px currentColor;letter-spacing:0.952px;color:#2a2a2a">14</div></div><div class="a" style="left:780px;top:0;width:96px;height:216px;overflow:hidden"><div class="t" style="left:7.93px;top:130.64px;font-size:12px;-webkit-text-stroke:0.15px currentColor;letter-spacing:0.944px;color:#2a2a2a">1</div></div><div class="a" style="left:1072px;top:0;width:96px;height:216px;overflow:hidden"><div class="t" style="left:7.93px;top:133.64px;font-size:12px;-webkit-text-stroke:0.15px currentColor;letter-spacing:1.001px;color:#2a2a2a">2024-09-05</div></div><div class="a" style="left:1072px;top:0;width:96px;height:216px;overflow:hidden"><div class="t" style="left:7.93px;top:149.64px;font-size:12px;-webkit-text-stroke:0.15px currentColor;letter-spacing:1.246px;color:#2a2a2a">06:52:29</div></div><div class="a" style="left:1267px;top:0;width:96px;height:216px;overflow:hidden"><div class="t" style="left:7.60px;top:130.64px;font-size:12px;-webkit-text-stroke:0.15px currentColor;letter-spacing:0.757px;color:#2a2a2a">True</div></div><div class="a" style="left:1px;top:0;width:97px;height:216px;overflow:hidden"><div class="t" style="left:8.27px;top:180.39px;font-size:12px;-webkit-text-stroke:0.15px currentColor;letter-spacing:0.818px;color:#2a2a2a">Task</div></div><div class="a" style="left:1px;top:0;width:97px;height:216px;overflow:hidden"><div class="t" style="left:8.27px;top:196.39px;font-size:12px;-webkit-text-stroke:0.15px currentColor;letter-spacing:0.861px;color:#2a2a2a">Scheduler-13:50</div></div><div class="a" style="left:99px;top:0;width:96px;height:216px;overflow:hidden"><div class="t" style="left:7.60px;top:184.39px;font-size:12px;-webkit-text-stroke:0.15px currentColor;letter-spacing:0.863px;color:#3a78dc">a20f06b115ea4c2d</div></div><div class="a" style="left:293px;top:0;width:97px;height:216px;overflow:hidden"><div class="t" style="left:8.27px;top:180.39px;font-size:12px;-webkit-text-stroke:0.15px currentColor;letter-spacing:1.001px;color:#2a2a2a">2024-09-20</div></div><div class="a" style="left:293px;top:0;width:97px;height:216px;overflow:hidden"><div class="t" style="left:8.27px;top:196.39px;font-size:12px;-webkit-text-stroke:0.15px currentColor;letter-spacing:1.246px;color:#2a2a2a">13:50:00</div></div><div class="a" style="left:391px;top:0;width:96px;height:216px;overflow:hidden"><div class="t" style="left:7.60px;top:177.39px;font-size:12px;-webkit-text-stroke:0.15px currentColor;letter-spacing:0.683px;color:#2a2a2a">Example Project</div></div><div class="a" style="left:488px;top:0;width:96px;height:216px;overflow:hidden"><div class="t" style="left:7.93px;top:177.39px;font-size:12px;-webkit-text-stroke:0.15px currentColor;letter-spacing:0.878px;color:#2a2a2a">new_test</div></div><div class="a" style="left:585px;top:0;width:97px;height:216px;overflow:hidden"><div class="t" style="left:8.26px;top:177.39px;font-size:12px;-webkit-text-stroke:0.15px currentColor;letter-spacing:0.952px;color:#2a2a2a">50</div></div><div class="a" style="left:683px;top:0;width:96px;height:216px;overflow:hidden"><div class="t" style="left:7.60px;top:177.39px;font-size:12px;-webkit-text-stroke:0.15px currentColor;letter-spacing:0.952px;color:#2a2a2a">13</div></div><div class="a" style="left:780px;top:0;width:96px;height:216px;overflow:hidden"><div class="t" style="left:7.93px;top:177.39px;font-size:12px;-webkit-text-stroke:0.15px currentColor;letter-spacing:0.944px;color:#2a2a2a">1</div></div><div class="a" style="left:1072px;top:0;width:96px;height:216px;overflow:hidden"><div class="t" style="left:7.93px;top:180.39px;font-size:12px;-webkit-text-stroke:0.15px currentColor;letter-spacing:1.001px;color:#2a2a2a">2024-09-05</div></div><div class="a" style="left:1072px;top:0;width:96px;height:216px;overflow:hidden"><div class="t" style="left:7.93px;top:196.39px;font-size:12px;-webkit-text-stroke:0.15px currentColor;letter-spacing:1.246px;color:#2a2a2a">06:52:29</div></div><div class="a" style="left:1267px;top:0;width:96px;height:216px;overflow:hidden"><div class="t" style="left:7.60px;top:177.39px;font-size:12px;-webkit-text-stroke:0.15px currentColor;letter-spacing:0.757px;color:#2a2a2a">True</div></div></div><div class="a" style="left:536px;top:740px;width:1310px;height:340px;overflow:hidden"><div class="a" style="left:0;top:0;width:1310px;height:29px;background:#e3e6f0"></div><div class="a" style="left:0;top:0px;width:1310px;height:1px;background:#d3d7e4"></div><div class="a" style="left:0;top:29px;width:1310px;height:1px;background:#d3d7e4"></div><div class="a" style="left:0;top:60px;width:1310px;height:1px;background:#d6dbec"></div><div class="a" style="left:0;top:91px;width:1310px;height:1px;background:#d6dbec"></div><div class="a" style="left:0;top:122px;width:1310px;height:1px;background:#d6dbec"></div><div class="a" style="left:0;top:153px;width:1310px;height:1px;background:#d6dbec"></div><div class="a" style="left:0;top:184px;width:1310px;height:1px;background:#d6dbec"></div><div class="a" style="left:0;top:215px;width:1310px;height:1px;background:#d6dbec"></div><div class="a" style="left:0;top:246px;width:1310px;height:1px;background:#d6dbec"></div><div class="a" style="left:0;top:277px;width:1310px;height:1px;background:#d6dbec"></div><div class="a" style="left:0;top:308px;width:1310px;height:1px;background:#d6dbec"></div><div class="a" style="left:0;top:339px;width:1310px;height:1px;background:#d6dbec"></div><div class="a" style="left:0px;top:0;width:1px;height:29px;background:#d3d7e4"></div><div class="a" style="left:0px;top:30px;width:1px;height:311px;background:#d6dbec"></div><div class="a" style="left:328px;top:0;width:1px;height:29px;background:#d3d7e4"></div><div class="a" style="left:328px;top:30px;width:1px;height:311px;background:#d6dbec"></div><div class="a" style="left:655px;top:0;width:1px;height:29px;background:#d3d7e4"></div><div class="a" style="left:655px;top:30px;width:1px;height:311px;background:#d6dbec"></div><div class="a" style="left:982px;top:0;width:1px;height:29px;background:#d3d7e4"></div><div class="a" style="left:982px;top:30px;width:1px;height:311px;background:#d6dbec"></div><div class="a" style="left:1309px;top:0;width:1px;height:29px;background:#d3d7e4"></div><div class="a" style="left:1309px;top:30px;width:1px;height:311px;background:#d6dbec"></div><div class="t" style="left:9px;top:7.34px;font-size:12px;-webkit-text-stroke:0.15px currentColor;letter-spacing:0.901px;color:#2a2a2a">name</div><div class="t" style="left:337px;top:7.34px;font-size:12px;-webkit-text-stroke:0.15px currentColor;letter-spacing:0.800px;color:#2a2a2a">task id</div><div class="t" style="left:664px;top:7.34px;font-size:12px;-webkit-text-stroke:0.15px currentColor;letter-spacing:0.855px;color:#2a2a2a">started</div><div class="t" style="left:991px;top:7.34px;font-size:12px;-webkit-text-stroke:0.15px currentColor;letter-spacing:0.687px;color:#2a2a2a">finished</div><div class="t" style="left:9px;top:36.84px;font-size:12px;-webkit-text-stroke:0.15px currentColor;letter-spacing:0.854px;color:#2a2a2a">Task Scheduler-14:20</div><div class="t" style="left:337px;top:39.84px;font-size:12px;-webkit-text-stroke:0.15px currentColor;letter-spacing:0.819px;color:#3a78dc">e4b347a82d334c5eaa74d2212e3f88af</div><div class="t" style="left:664px;top:36.84px;font-size:12px;-webkit-text-stroke:0.15px currentColor;letter-spacing:1.099px;color:#2a2a2a">2024-09-19 14:20:02</div><div class="t" style="left:991px;top:36.84px;font-size:12px;-webkit-text-stroke:0.15px currentColor;letter-spacing:1.099px;color:#2a2a2a">2024-09-19 14:50:08</div><div class="t" style="left:9px;top:67.84px;font-size:12px;-webkit-text-stroke:0.15px currentColor;letter-spacing:0.854px;color:#2a2a2a">Task Scheduler-14:10</div><div class="t" style="left:337px;top:70.84px;font-size:12px;-webkit-text-stroke:0.15px currentColor;letter-spacing:0.783px;color:#3a78dc">15dad4a3dcd74e3c90564a1ec6af485d</div><div class="t" style="left:664px;top:67.84px;font-size:12px;-webkit-text-stroke:0.15px currentColor;letter-spacing:1.099px;color:#2a2a2a">2024-09-19 14:10:00</div><div class="t" style="left:991px;top:67.84px;font-size:12px;-webkit-text-stroke:0.15px currentColor;letter-spacing:1.099px;color:#2a2a2a">2024-09-19 14:50:08</div><div class="t" style="left:9px;top:98.84px;font-size:12px;-webkit-text-stroke:0.15px currentColor;letter-spacing:0.854px;color:#2a2a2a">Task Scheduler-14:00</div><div class="t" style="left:337px;top:101.84px;font-size:12px;-webkit-text-stroke:0.15px currentColor;letter-spacing:0.841px;color:#3a78dc">39eae6c581964f568366e4ee203016d9</div><div class="t" style="left:664px;top:98.84px;font-size:12px;-webkit-text-stroke:0.15px currentColor;letter-spacing:1.099px;color:#2a2a2a">2024-09-19 14:00:02</div><div class="t" style="left:991px;top:98.84px;font-size:12px;-webkit-text-stroke:0.15px currentColor;letter-spacing:1.099px;color:#2a2a2a">2024-09-19 14:50:08</div><div class="t" style="left:9px;top:129.84px;font-size:12px;-webkit-text-stroke:0.15px currentColor;letter-spacing:0.854px;color:#2a2a2a">Task Scheduler-13:50</div><div class="t" style="left:337px;top:132.84px;font-size:12px;-webkit-text-stroke:0.15px currentColor;letter-spacing:0.813px;color:#3a78dc">0d98dd1e9eec42178ea00db2f2d4ab42</div><div class="t" style="left:664px;top:129.84px;font-size:12px;-webkit-text-stroke:0.15px currentColor;letter-spacing:1.099px;color:#2a2a2a">2024-09-19 13:50:00</div><div class="t" style="left:991px;top:129.84px;font-size:12px;-webkit-text-stroke:0.15px currentColor;letter-spacing:1.099px;color:#2a2a2a">2024-09-19 14:50:08</div><div class="t" style="left:9px;top:160.84px;font-size:12px;-webkit-text-stroke:0.15px currentColor;letter-spacing:0.854px;color:#2a2a2a">Task Scheduler-14:20</div><div class="t" style="left:337px;top:163.84px;font-size:12px;-webkit-text-stroke:0.15px currentColor;letter-spacing:0.841px;color:#3a78dc">9ed768483f78470fb67ed7795ccffcb6</div><div class="t" style="left:664px;top:160.84px;font-size:12px;-webkit-text-stroke:0.15px currentColor;letter-spacing:1.099px;color:#2a2a2a">2024-09-18 14:20:01</div><div class="t" style="left:991px;top:160.84px;font-size:12px;-webkit-text-stroke:0.15px currentColor;letter-spacing:1.099px;color:#2a2a2a">2024-09-19 14:50:09</div><div class="t" style="left:9px;top:191.84px;font-size:12px;-webkit-text-stroke:0.15px currentColor;letter-spacing:0.854px;color:#2a2a2a">Task Scheduler-14:10</div><div class="t" style="left:337px;top:194.84px;font-size:12px;-webkit-text-stroke:0.15px currentColor;letter-spacing:0.868px;color:#3a78dc">05bb8fdcd57c4f808879bd2564fb1b89</div><div class="t" style="left:664px;top:191.84px;font-size:12px;-webkit-text-stroke:0.15px currentColor;letter-spacing:1.099px;color:#2a2a2a">2024-09-18 14:10:00</div><div class="t" style="left:991px;top:191.84px;font-size:12px;-webkit-text-stroke:0.15px currentColor;letter-spacing:1.099px;color:#2a2a2a">2024-09-19 14:50:09</div><div class="t" style="left:9px;top:222.84px;font-size:12px;-webkit-text-stroke:0.15px currentColor;letter-spacing:0.854px;color:#2a2a2a">Task Scheduler-14:00</div><div class="t" style="left:337px;top:225.84px;font-size:12px;-webkit-text-stroke:0.15px currentColor;letter-spacing:0.884px;color:#3a78dc">161f8fa41798462c82b7f9d895ab6d00</div><div class="t" style="left:664px;top:222.84px;font-size:12px;-webkit-text-stroke:0.15px currentColor;letter-spacing:1.099px;color:#2a2a2a">2024-09-18 14:00:01</div><div class="t" style="left:991px;top:222.84px;font-size:12px;-webkit-text-stroke:0.15px currentColor;letter-spacing:1.099px;color:#2a2a2a">2024-09-19 14:50:09</div><div class="t" style="left:9px;top:253.84px;font-size:12px;-webkit-text-stroke:0.15px currentColor;letter-spacing:0.854px;color:#2a2a2a">Task Scheduler-13:50</div><div class="t" style="left:337px;top:256.84px;font-size:12px;-webkit-text-stroke:0.15px currentColor;letter-spacing:0.887px;color:#3a78dc">1b324711071c41288c1cda585d9659d9</div><div class="t" style="left:664px;top:253.84px;font-size:12px;-webkit-text-stroke:0.15px currentColor;letter-spacing:1.099px;color:#2a2a2a">2024-09-18 13:50:00</div><div class="t" style="left:991px;top:253.84px;font-size:12px;-webkit-text-stroke:0.15px currentColor;letter-spacing:1.099px;color:#2a2a2a">2024-09-19 14:50:09</div><div class="t" style="left:9px;top:284.84px;font-size:12px;-webkit-text-stroke:0.15px currentColor;letter-spacing:0.854px;color:#2a2a2a">Task Scheduler-14:20</div><div class="t" style="left:337px;top:287.84px;font-size:12px;-webkit-text-stroke:0.15px currentColor;letter-spacing:0.875px;color:#3a78dc">2e39b8a161144de59765d63802c3a0ad</div><div class="t" style="left:664px;top:284.84px;font-size:12px;-webkit-text-stroke:0.15px currentColor;letter-spacing:1.099px;color:#2a2a2a">2024-09-17 14:20:01</div><div class="t" style="left:991px;top:284.84px;font-size:12px;-webkit-text-stroke:0.15px currentColor;letter-spacing:1.099px;color:#2a2a2a">2024-09-19 14:50:09</div><div class="t" style="left:9px;top:315.84px;font-size:12px;-webkit-text-stroke:0.15px currentColor;letter-spacing:0.854px;color:#2a2a2a">Task Scheduler-14:10</div><div class="t" style="left:337px;top:318.84px;font-size:12px;-webkit-text-stroke:0.15px currentColor;letter-spacing:0.800px;color:#3a78dc">1baa73b677d24bbcacf3d73142ae5e59</div><div class="t" style="left:664px;top:315.84px;font-size:12px;-webkit-text-stroke:0.15px currentColor;letter-spacing:1.099px;color:#2a2a2a">2024-09-17 14:10:00</div><div class="t" style="left:991px;top:315.84px;font-size:12px;-webkit-text-stroke:0.15px currentColor;letter-spacing:1.099px;color:#2a2a2a">2024-09-19 14:50:09</div></div><div class="a" style="left:1665px;top:685px;width:1px;height:22px;background:#eef0fa"></div><div class="a" style="left:1706px;top:685px;width:1px;height:22px;background:#eef0fa"></div><div class="a" style="left:1823px;top:685px;width:1px;height:22px;background:#eef0fa"></div><svg style="left:1672px;top:684px" width="136" height="28" viewBox="0 0 136 28">
<path d="M10.5 9.9 L11.3 7.1 L17.7 7.1 L18.5 9.9 Z" fill="#0a60ae"/>
<rect x="6.2" y="9.9" width="15.8" height="10.6" rx="1.2" fill="#0a60ae"/>
<circle cx="14" cy="14.9" r="3.35" fill="none" stroke="#fff" stroke-width="1.5"/>
<path d="M19.2 11.6 L20.2 12.9 L19.2 12.9 Z" fill="#fff"/>
<path d="M49 11.2 H60.2 Q61.8 11.2 61.8 12.8 V15.1 Q61.8 16.6 60.2 16.6 H51 Q49.6 16.6 49.6 15.2 V14.8 L49.2 14.8 Q49 14.6 49 14.2 Z" fill="#0a60ae"/>
<rect x="48.8" y="13.1" width="1.6" height="1.8" fill="#0a60ae"/>
<path d="M74.1 6 H79.2 L84.8 11.5 V20.8 Q84.8 21.8 83.8 21.8 H74.1 Q73.1 21.8 73.1 20.8 V7 Q73.1 6 74.1 6 Z" fill="#0a60ae"/>
<path d="M79.3 6.2 V10.8 H84.6" fill="none" stroke="#fff" stroke-width="0.9"/>
<text x="79" y="20" font-family="Liberation Sans" font-size="5.5" font-weight="700" fill="#fff" text-anchor="middle">(j)</text>
<path d="M98.2 6 H103.3 L108.9 11.5 V20.8 Q108.9 21.8 107.9 21.8 H98.2 Q97.2 21.8 97.2 20.8 V7 Q97.2 6 98.2 6 Z" fill="#0a60ae"/>
<path d="M103.4 6.2 V10.8 H108.7" fill="none" stroke="#fff" stroke-width="0.9"/>
<text x="103" y="19.6" font-family="Liberation Sans" font-size="4.6" font-weight="700" fill="#fff" text-anchor="middle">csv</text>
<rect x="119.2" y="6" width="15.5" height="15.8" rx="1.3" fill="#0a60ae"/>
<path d="M123.6 10.8 L121 13.9 L123.6 17 M131.5 10.8 L134.1 13.9 L131.5 17" fill="none" stroke="#fff" stroke-width="1.2"/>
<path d="M128.6 8.2 L126.3 19.8" fill="none" stroke="#fff" stroke-width="1.1"/>
</svg><svg style="left:1836px;top:689px" width="16" height="16" viewBox="0 0 16 16">
<path d="M2.5 13.5 L13.5 2.5" stroke="#0a60ae" stroke-width="1.6"/>
<path d="M8.6 1 L15 1 L15 7.4 Z" fill="#0a60ae"/><path d="M1 8.6 L1 15 L7.4 15 Z" fill="#0a60ae"/>
</svg>
</body></html>
